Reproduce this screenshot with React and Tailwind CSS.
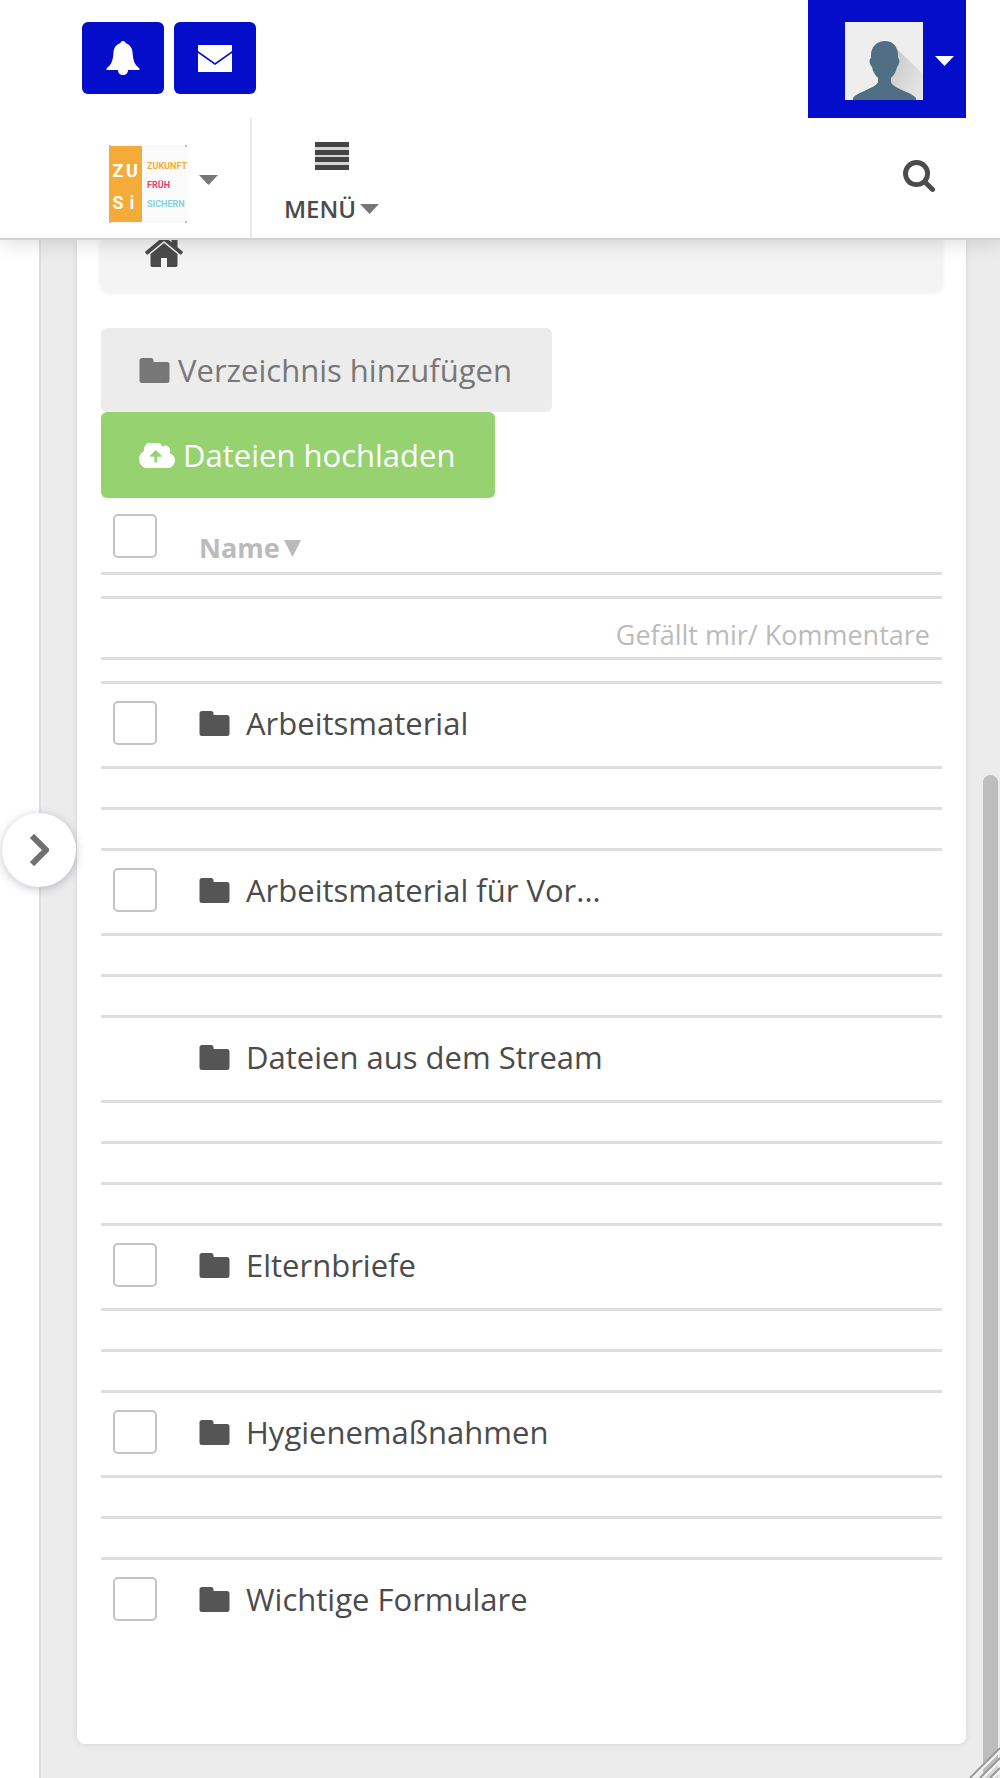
import React from 'react';

const folders = [
  { name: 'Arbeitsmaterial', selectable: true, spacers: 2 },
  { name: 'Arbeitsmaterial für Vor...', selectable: true, spacers: 2 },
  { name: 'Dateien aus dem Stream', selectable: false, spacers: 3 },
  { name: 'Elternbriefe', selectable: true, spacers: 2 },
  { name: 'Hygienemaßnahmen', selectable: true, spacers: 2 },
  { name: 'Wichtige Formulare', selectable: true, spacers: 0 },
];

const FolderIcon = ({ className }) => (
  <svg viewBox="0 0 30 25" className={className} fill="currentColor" aria-hidden="true">
    <path d="M2.5 0h9q2.5 0 2.5 2.5v1.5h13.5q2.5 0 2.5 2.5v16q0 2.500-2.500 2.500h-25q-2.500 0-2.500-2.500v-20q0-2.500 2.500-2.500z" />
  </svg>
);

const UploadIcon = () => (
  <svg viewBox="0 256 1920 1280" preserveAspectRatio="none" className="w-9 h-[25px]" fill="currentColor" aria-hidden="true">
    <path
      fillRule="evenodd"
      d="M1200 900L896 610L592 900V960H820V1260H972V960H1200zM1920 1152q0 159-112.5 271.500t-271.500 112.500h-1088q-185 0-316.500-131.500t-131.500-316.500q0-130 70-240t188-165q-2-30-2-43 0-212 150-362t362-150q156 0 285.500 87t188.500 231q71-62 166-62 106 0 181 75t75 181q0 76-41 138 130 31 213.500 135.500t83.500 238.500z"
    />
  </svg>
);

const HomeIcon = () => (
  <svg viewBox="0 0 1792 1792" className="w-[42px] h-[42px] shrink-0" fill="currentColor" aria-hidden="true">
    <path d="M1472 992v480q0 26-19 45t-45 19h-384v-384h-256v384h-384q-26 0-45-19t-19-45v-480q0-1 .5-3t.5-3l575-474 575 474q1 2 1 6zm223-69l-62 74q-8 9-21 11h-3q-13 0-21-7l-692-577-692 577q-12 8-24 7-13-2-21-11l-62-74q-8-10-7-23.5t11-21.5l719-599q32-26 76-26t76 26l244 204v-195q0-14 9-23t23-9h192q14 0 23 9t9 23v408l219 182q10 8 11 21.5t-7 23.5z" />
  </svg>
);

const SearchIcon = () => (
  <svg viewBox="64 128 1664 1664" className="w-8 h-8" fill="currentColor" aria-hidden="true">
    <path d="M1216 832q0-185-131.5-316.5t-316.5-131.5-316.5 131.5-131.5 316.5 131.5 316.5 316.5 131.5 316.5-131.5 131.5-316.5zm512 832q0 52-38 90t-90 38q-54 0-90-38l-343-342q-179 124-399 124-143 0-273.5-55.5t-225-150-150-225-55.5-273.5 55.5-273.5 150-225 225-150 273.5-55.5 273.5 55.5 225 150 150 225 55.5 273.5q0 220-124 399l343 343q37 37 37 90z" />
  </svg>
);

const BellIcon = () => (
  <svg viewBox="0 0 34 34" className="w-[34px] h-[34px]" fill="currentColor" aria-hidden="true">
    <path d="M17 0c1.500 0 2.500 1 2.500 2C24 3.500 26 7 26.500 11c.6 8 1.500 12 7 16.500V29H22c0 3-2 5-5 5s-5-2-5-5H.500v-1.500C6 23 7 19 7.500 11 8 7 10 3.500 14.500 2c0-1 1-2 2.500-2z" />
  </svg>
);

const MailIcon = () => (
  <svg viewBox="0 0 34 27" className="w-[34px] h-[27px]" fill="currentColor" aria-hidden="true">
    <path d="M0 0h34v6L17 18 0 6zM0 8l17 12 17-12V27H0z" />
  </svg>
);

const Caret = ({ className = '' }) => (
  <svg viewBox="0 0 19 10" className={`w-[19px] h-[10px] ${className}`} fill="currentColor" aria-hidden="true">
    <path d="M0 0h19L9.500 10z" />
  </svg>
);

const Avatar = () => (
  <svg viewBox="0 0 78 78" className="w-[78px] h-[78px]" aria-hidden="true">
    <defs>
      <linearGradient id="avatarShade" x1="0" y1="0" x2="1" y2="0.600">
        <stop offset="0" stopColor="#c4c4c4" />
        <stop offset="1" stopColor="#e4e4e4" />
      </linearGradient>
    </defs>
    <rect width="78" height="78" fill="#eeeeee" />
    <path d="M52 27l26 25v26H50L42 55z" fill="url(#avatarShade)" />
    <path
      d="M40 19c8 0 13 6 13 14v3c2 1 2 6-1 9-1 5-3 8-6 11v4c2 7 21 10 25 16v2H8v-2c4-6 23-10 25-16v-4c-3-3-5-6-6-11-3-3-3-8-1-9v-3c0-8 6-14 14-14z"
      fill="#506e84"
    />
  </svg>
);

const Logo = () => (
  <svg viewBox="0 0 78 78" className="w-[78px] h-[78px]" role="img" aria-label="ZUSi Zukunft früh sichern">
    <rect width="78" height="78" fill="#fbfbfb" />
    <rect y="1" width="33" height="76" fill="#f4ab3a" />
    <g className="font-['Roboto'] font-bold text-[18px]" fill="#fff" textAnchor="middle">
      <text x="9" y="32">Z</text>
      <text x="23" y="32">U</text>
      <text x="9" y="64">S</text>
      <text x="23" y="64">i</text>
    </g>
    <g className="font-['Roboto'] font-bold text-[9px]">
      <text x="38" y="24" fill="#f4ab3a">ZUKUNFT</text>
      <text x="38" y="43" fill="#ea3f6c">FRÜH</text>
      <text x="38" y="62" fill="#86d3d6">SICHERN</text>
    </g>
    <path d="M0 0h2v2H0zM76 0h2v2h-2zM0 76h2v2H0zM76 76h2v2h-2z" fill="#d3a6dc" />
  </svg>
);

const Checkbox = ({ label }) => (
  <input
    type="checkbox"
    aria-label={label}
    className="appearance-none w-11 h-11 shrink-0 bg-white border-2 border-[#c4c4c4] rounded-[5px] checked:bg-gray-300"
  />
);

const Header = () => (
  <header className="relative z-10 bg-white border-b-2 border-[#d2d2d2] shadow-[0_2px_20px_rgba(0,0,0,0.15)]">
    <div className="flex justify-between h-[118px] pl-[82px] pr-[34px]">
      <div className="flex gap-[10px] pt-[22px]">
        <button type="button" aria-label="Benachrichtigungen" className="flex items-center justify-center w-[82px] h-[72px] rounded-md bg-[#040dca] text-white">
          <BellIcon />
        </button>
        <button type="button" aria-label="Nachrichten" className="flex items-center justify-center w-[82px] h-[72px] rounded-md bg-[#040dca] text-white">
          <MailIcon />
        </button>
      </div>
      <button type="button" aria-label="Konto" className="flex items-center gap-3 pt-1 pl-[37px] pr-3 bg-[#040dca] text-white">
        <Avatar />
        <Caret />
      </button>
    </div>

    <nav className="flex h-[120px]">
      <button type="button" className="flex items-center gap-3 pl-[109px] pr-8 pt-3 border-r-2 border-[#ebebeb] text-[#777]">
        <Logo />
        <Caret className="mb-2" />
      </button>
      <button type="button" className="flex flex-col items-center pt-6 px-8 text-[#4b4b4b]">
        <svg viewBox="0 0 34 28" className="w-[34px] h-7" aria-hidden="true">
          <rect width="34" height="28" fill="#d4d4d4" />
          <path d="M0 0h34v5H0zM0 8h34v5H0zM0 15h34v5H0zM0 23h34v5H0z" fill="#444" />
        </svg>
        <span className="flex items-center gap-1 mt-[23px] text-[24px] leading-8 font-semibold">
          MENÜ
          <Caret className="text-[#777]" />
        </span>
      </button>
      <button type="button" aria-label="Suche" className="ml-auto pr-[65px] pb-1 text-[#4b4b4b]">
        <SearchIcon />
      </button>
    </nav>
  </header>
);

const Spacer = ({ className }) => <td className={`block border-t-3 border-[#dedede] ${className}`} />;

const FileTable = () => (
  <table className="block w-full">
    <thead className="block">
      <tr className="block">
        <th className="flex items-start h-[74px] pt-4 pl-3 gap-[42px] text-[27px] font-bold text-[#bbb]">
          <Checkbox label="Alle auswählen" />
          <a href="#name" className="flex items-center gap-1 pt-2 leading-[52px]">
            Name
            <svg viewBox="0 0 17 17" className="w-[17px] h-[17px]" fill="currentColor" aria-hidden="true">
              <path d="M0 0h17L8.500 17z" />
            </svg>
          </a>
        </th>
        <Spacer className="h-6" />
        <th className="block h-[61px] pt-4 pr-3 border-t-3 border-[#dedede] text-right text-[27px] leading-10 font-normal text-[#bbb]">
          Gefällt mir/ Kommentare
        </th>
        <Spacer className="h-6" />
      </tr>
    </thead>
    <tbody className="block">
      {folders.map((folder) => (
        <tr key={folder.name} className="block">
          <td className="flex items-center h-[85px] pl-3 pb-1 gap-[42px] border-t-3 border-[#dedede]">
            {folder.selectable ? <Checkbox label={folder.name} /> : <span className="w-11" />}
            <a href="#ordner" className="flex items-center gap-4 text-[31px] leading-10 text-[#4b4b4b]">
              <FolderIcon className="w-[31px] h-[25px] text-[#555]" />
              {folder.name}
            </a>
          </td>
          {Array.from({ length: folder.spacers }, (_, i) => (
            <Spacer key={i} className="h-[41px]" />
          ))}
        </tr>
      ))}
    </tbody>
  </table>
);

const App = () => {
  return (
    <div className="relative flex flex-col min-h-screen overflow-hidden bg-[#ececec] font-['Open_Sans',sans-serif]">
      <Header />

      <div className="relative flex flex-1">
        <aside className="w-[41px] shrink-0 bg-white border-r-2 border-[#dcdce2]" />

        <main className="flex-1 min-w-0 pl-9 pr-[17px] pb-8">
          <div className="bg-white rounded-b-lg px-6 pb-[102px] shadow-[0_0_6px_rgba(0,0,0,0.1)]">
            <div className="flex items-end h-[52px] pl-[42px] pb-[19px] overflow-hidden bg-[#f4f4f4] rounded-b-lg shadow-[0_0_5px_rgba(0,0,0,0.1)] text-[#4b4b4b]">
              <a href="#start" aria-label="Startseite">
                <HomeIcon />
              </a>
            </div>

            <div className="flex flex-col items-start pt-9 text-[31px] leading-10">
              <button type="button" className="flex items-center gap-2 h-[84px] pl-[38px] pr-10 rounded-md bg-[#ececec] text-[#777]">
                <FolderIcon className="w-[31px] h-[25px]" />
                Verzeichnis hinzufügen
              </button>
              <button type="button" className="flex items-center gap-2 h-[86px] pl-[38px] pr-10 rounded-md bg-[#97d271] text-white">
                <UploadIcon />
                Dateien hochladen
              </button>
            </div>

            <FileTable />
          </div>
        </main>

        {/* Scrollbar */}
        <div className="flex flex-col w-[17px] shrink-0 pt-[535px] pr-[2px]">
          <div className="flex-1 rounded-t-full bg-[#bdbdbd]" />
        </div>

        <button
          type="button"
          aria-label="Seitenleiste öffnen"
          className="absolute left-[2px] top-[573px] flex items-center justify-center w-[74px] h-[74px] rounded-full bg-white shadow-[0_2px_10px_rgba(60,60,90,0.3)]"
        >
          <svg viewBox="0 0 20 32" className="w-5 h-8" fill="none" stroke="#707070" strokeWidth="6" aria-hidden="true">
            <path d="M3 2l14 14L3 30" />
          </svg>
        </button>
      </div>

      <svg viewBox="0 0 32 32" className="absolute right-0 bottom-0 w-8 h-8" fill="none" aria-hidden="true">
        <path d="M12 32l20-20v20z" fill="#ececec" opacity=".5" />
        <path d="M2 32L32 2M12 32l20-20M22 32l10-10" stroke="#999" strokeWidth="2" />
        <path d="M5 32L32 5M15 32l17-17M25 32l7-7" stroke="#f4f4f4" strokeWidth="2" />
      </svg>
    </div>
  );
};

export default App;
